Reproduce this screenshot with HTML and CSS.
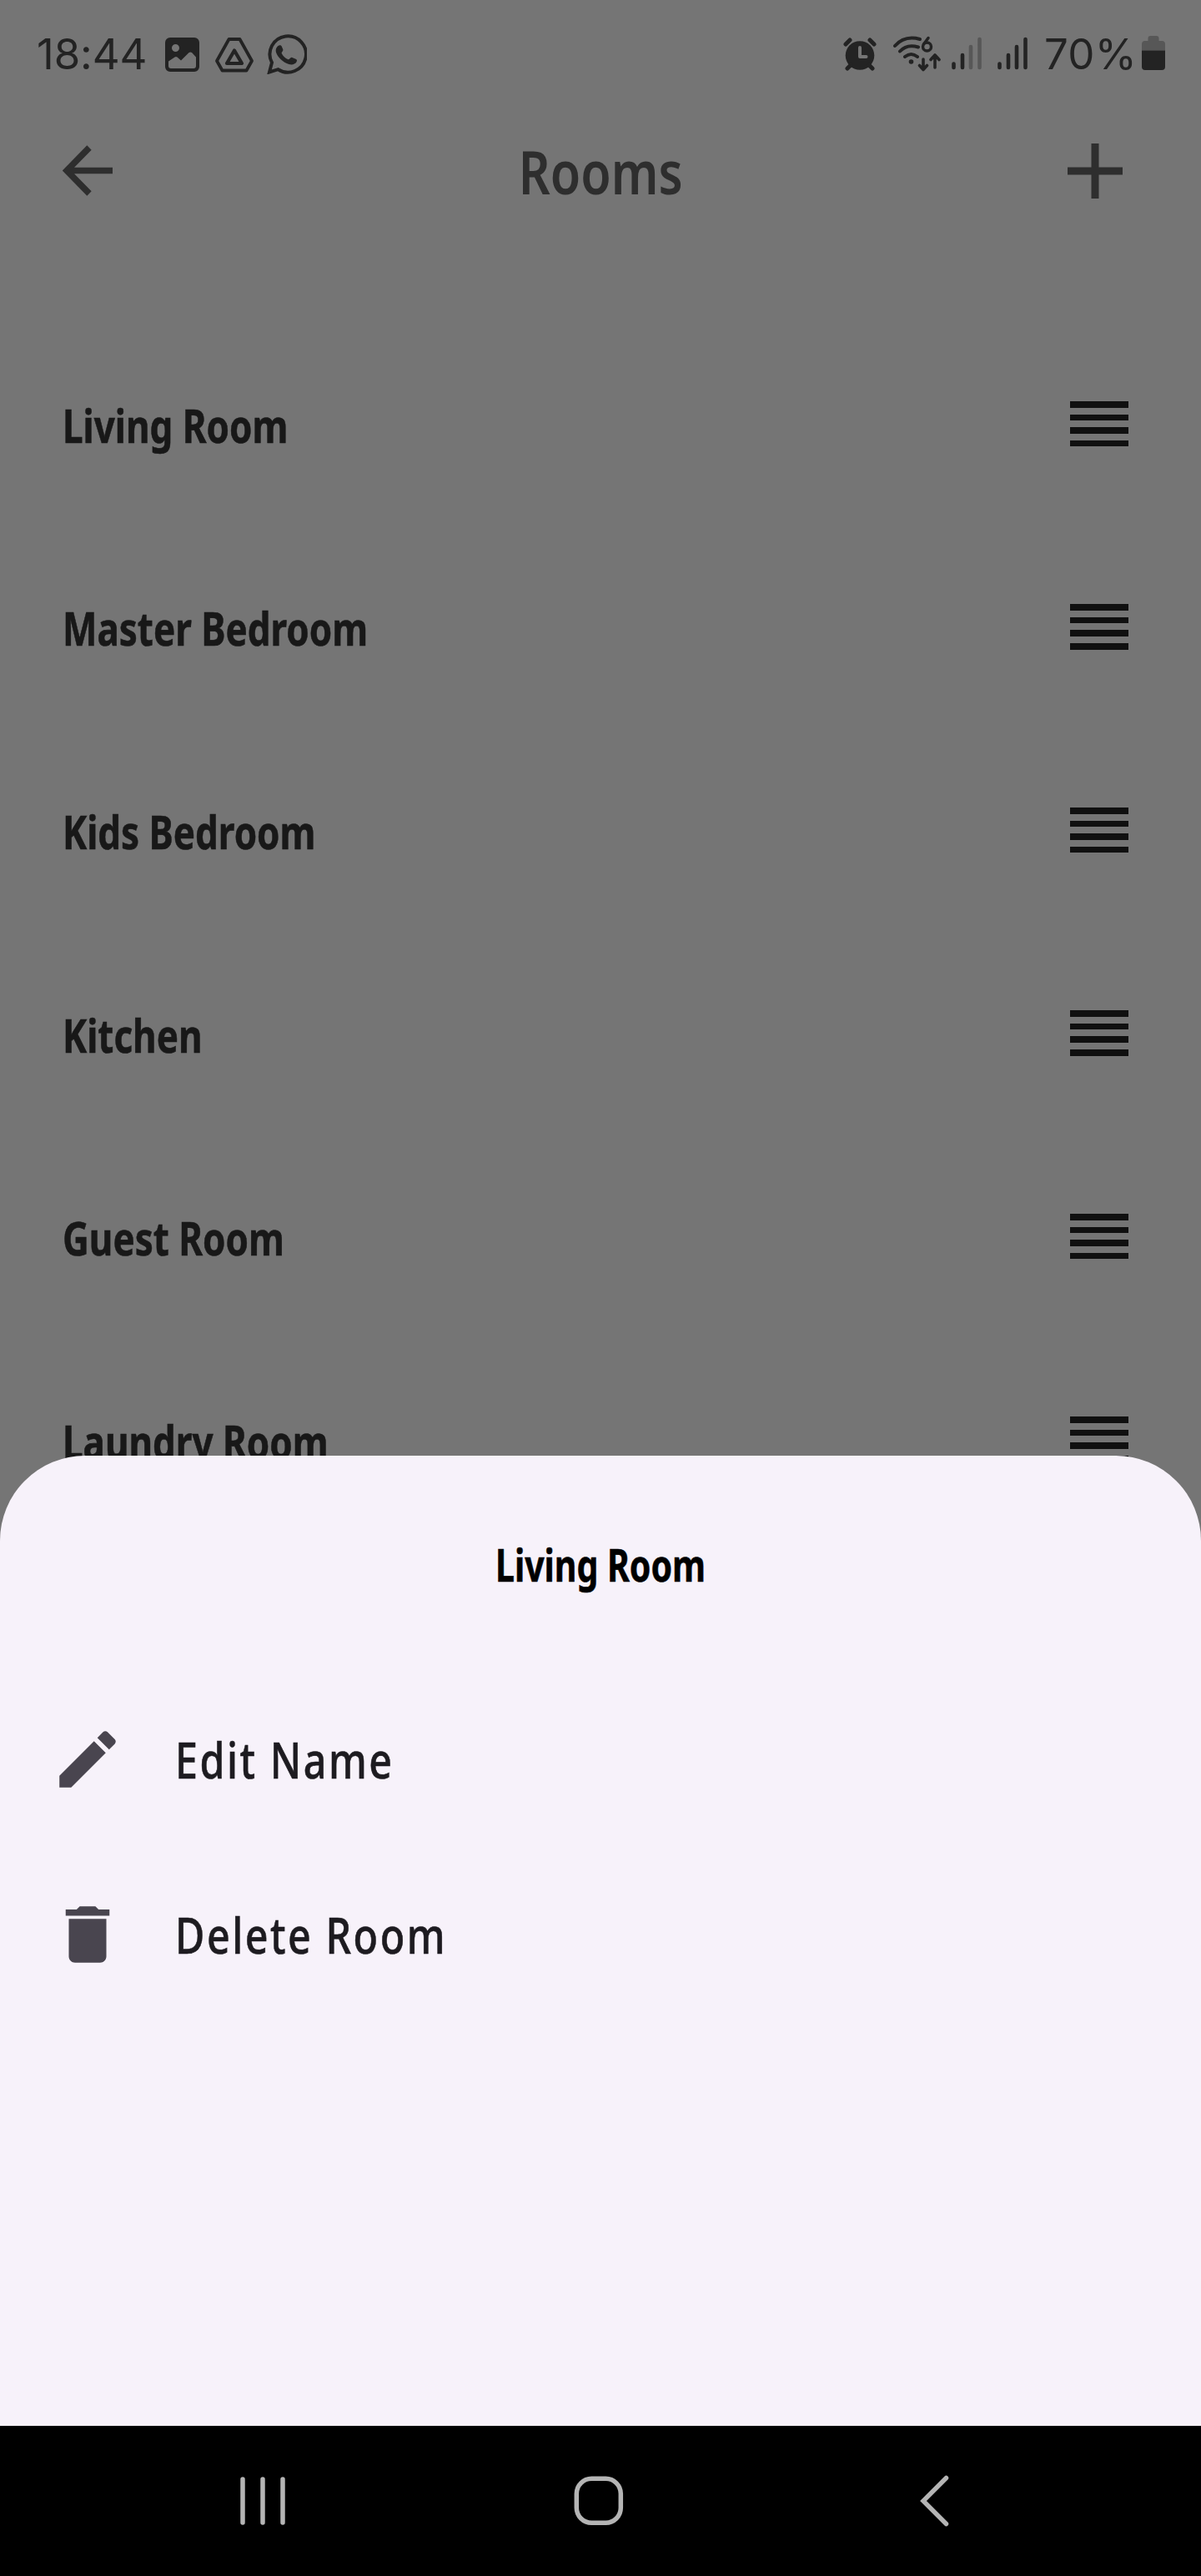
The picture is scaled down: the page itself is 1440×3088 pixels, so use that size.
FILE: index.html
```html
<!DOCTYPE html>
<html lang="en">
<head>
<meta charset="utf-8">
<title>Rooms</title>
<link rel="stylesheet" href="styles.css">
</head>
<body>
<div class="screen">
  <header class="status">
    <div class="status-left">
      <span class="clock">18:44</span>
      <svg class="s-photo" width="41" height="41" viewBox="0 0 41 41"><path fill="currentColor" fill-rule="evenodd" d="M6 0h29a6 6 0 0 1 6 6v29a6 6 0 0 1-6 6H6a6 6 0 0 1-6-6V6a6 6 0 0 1 6-6ZM12.500 8a4.500 4.500 0 1 0 0 9a4.500 4.500 0 0 0 0-9ZM4 28.500V34q0 3 3 3h27q3 0 3-3V23.500l-5-5.500q-1.700-1.200-3.400 0L19 27.500l-4.500-4q-1.500-1-3 0Z"/></svg>
      <svg class="s-drive" width="48" height="44" viewBox="0 0 48 44" fill="none" stroke="currentColor" stroke-width="3.800" stroke-linejoin="round"><path d="M17.500 3h13l14.500 26-6.500 11.500h-29L3 29Z"/><path stroke-width="4.200" d="M24 16.500l9 15.500H15Z"/></svg>
      <svg class="s-chat" width="48" height="48" viewBox="0 0 48 48"><path fill="none" stroke="currentColor" stroke-width="4" d="M3 45.500l3-11.500A21.700 21.700 0 1 1 13.500 42.200Z"/><path fill="currentColor" d="M14.500 13.500c1.700-.7 2.700-.2 3.300 1.200l1.600 3.900c.5 1.400-2 3-1.800 4.200 1.700 3.600 4.300 6 7.900 7.500 1.400.4 3-3 4.300-2.500l5.300 2.200c1.300.8 1 2 .4 3.300-1.800 3-5.500 3.700-9 2.700-7.300-2.300-13.500-8-15.500-14.200-1-4 .7-7 3.500-8.300Z"/></svg>
    </div>
    <div class="status-right">
      <svg class="s-alarm" width="40" height="40" viewBox="0 0 40 40"><circle cx="20" cy="21.500" r="17.300" fill="currentColor"/><g stroke="currentColor" stroke-width="5" stroke-linecap="round"><path d="M3 8l5-5M37 8l-5-5M9 33l-4 4M31 33l4 4"/></g><path d="M20 12v11h7.500" fill="none" stroke="#757575" stroke-width="4" stroke-linecap="round" stroke-linejoin="round"/></svg>
      <svg class="s-wifi" width="58" height="44" viewBox="0 0 58 44" fill="none" stroke="currentColor" stroke-width="4" stroke-linecap="round" stroke-linejoin="round"><path d="M3 12C11 3 22 1 33 4M9 18.500C15 12 23 11 31 13.500M15 25q7.500-6 15 0"/><circle cx="22.500" cy="31" r="2.800" fill="currentColor" stroke="none"/><path stroke-width="3.500" d="M43 2.500L37.500 10"/><circle cx="41.500" cy="13" r="5" stroke-width="3.500"/><path stroke-width="3.600" d="M37 28v12M32.500 35.500l4.500 5 4.500-5M51 38V24M46 28.500l5-5.500 5 5.500"/></svg>
      <svg class="s-signal" width="36" height="40" viewBox="0 0 36 40" stroke="currentColor" stroke-width="4.600" stroke-linecap="round"><path d="M2.500 32.500v4.500M13 22v15"/><path stroke="#575757" d="M23 12v25M33.500 3v34"/></svg>
      <svg class="s-signal2" width="36" height="40" viewBox="0 0 36 40" stroke="currentColor" stroke-width="4.600" stroke-linecap="round"><path d="M2.500 32.500v4.500M13 22v15M23 12v25M33.500 3v34"/></svg>
      <span class="percent">70%</span>
      <svg class="s-battery" width="28" height="42" viewBox="0 0 28 42"><path fill="#575757" d="M0 17.500V10q0-4 4-4h3.500V3q0-3 3-3h7q3 0 3 3v3H24q4 0 4 4v7.500Z"/><path fill="currentColor" d="M0 17.500h28V37q0 4-4 4H4q-4 0-4-4Z"/></svg>
    </div>
  </header>
  <nav class="appbar">
    <svg width="62" height="62" viewBox="0 0 62 62"><path fill="none" stroke="currentColor" stroke-width="7.500" d="M32 3L5 30.500 32 58M5 30.500h55"/></svg>
    <h1>Rooms</h1>
    <svg class="plus" width="66" height="66" viewBox="0 0 66 66"><path stroke="currentColor" stroke-width="9" d="M0 33h66M33 0v66"/></svg>
  </nav>
  <ul class="rooms">
    <li><span>Living Room</span><i class="grip"></i></li>
    <li><span>Master Bedroom</span><i class="grip"></i></li>
    <li><span>Kids Bedroom</span><i class="grip"></i></li>
    <li><span>Kitchen</span><i class="grip"></i></li>
    <li><span>Guest Room</span><i class="grip"></i></li>
    <li><span>Laundry Room</span><i class="grip"></i></li>
  </ul>
  <section class="sheet">
    <h2>Living Room</h2>
    <div class="action">
      <svg viewBox="0 0 24 24"><path fill="currentColor" d="M3 17.250V21h3.750L17.810 9.940l-3.750-3.750L3 17.250zM20.710 7.040c.39-.39.39-1.020 0-1.410l-2.340-2.340c-.39-.39-1.020-.39-1.410 0l-1.830 1.830 3.750 3.750 1.830-1.830z"/></svg>
      <span>Edit Name</span>
    </div>
    <div class="action">
      <svg viewBox="0 0 24 24"><path fill="currentColor" d="M6 19c0 1.100.9 2 2 2h8c1.100 0 2-.9 2-2V7H6v12zM19 4h-3.500l-1-1h-5l-1 1H5v2h14V4z"/></svg>
      <span>Delete Room</span>
    </div>
  </section>
  <footer class="navbar">
    <svg width="54" height="58" viewBox="0 0 54 58" stroke="currentColor" stroke-width="5.500" stroke-linecap="round"><path d="M3 3v52M27 3v52M51 3v52"/></svg>
    <svg class="home" width="60" height="60" viewBox="0 0 60 60" fill="none" stroke="currentColor" stroke-width="5.500"><rect x="3.300" y="3.300" width="53" height="53" rx="18"/></svg>
    <svg class="back" width="36" height="62" viewBox="0 0 36 62" fill="none" stroke="currentColor" stroke-width="5.500" stroke-linecap="round" stroke-linejoin="miter"><path d="M31.500 3.500L4 31l27.500 27.500"/></svg>
  </footer>
</div>
</body>
</html>
```
FILE: styles.css
```css
* { box-sizing: border-box; margin: 0; padding: 0; }
body { background: #757575; font-family: "Noto Sans", sans-serif; }
svg { display: block; flex: none; }
.screen { width: 1440px; height: 3088px; display: flex; flex-direction: column; overflow: hidden; background: #757575; }
.status { height: 130px; flex: none; display: flex; justify-content: space-between; padding: 0 43px 0 44px; color: #232323; font-family: "Inter", sans-serif; }
.status-left, .status-right { display: flex; align-items: flex-start; }
.clock, .percent { font-size: 51px; line-height: 62px; font-weight: 400; padding-top: 34px; white-space: nowrap; letter-spacing: 0.3px; }
.clock { width: 154px; letter-spacing: -0.1px; }
.percent { width: 117px; }
.s-photo { margin-top: 45px; }
.s-drive { margin: 44px 0 0 18px; }
.s-chat { margin: 41px 0 0 15px; }
.s-alarm { margin: 45px 19px 0 0; }
.s-wifi { margin: 43px 13px 0 0; }
.s-signal { margin: 44px 19px 0 0; }
.s-signal2 { margin: 44px 20px 0 0; }
.s-battery { margin-top: 43px; }
.appbar { height: 150px; flex: none; display: grid; grid-template-columns: 200px 1fr 200px; align-items: start; padding: 44px 94px 0 75px; color: #2e2e2e; }
.appbar h1 { font-size: 73px; line-height: 100px; font-weight: 560; margin-top: -19px; text-align: center; padding-left: 24px; transform: scaleX(0.81); }
.plus { justify-self: end; margin-top: -2px; }
.rooms { list-style: none; flex: none; height: 1464.700px; padding-top: 106px; }
.rooms li { height: 243.600px; display: flex; align-items: center; justify-content: space-between; padding: 0 87px 0 75px; font-size: 56px; line-height: 76px; font-weight: 700; color: #181818; }
.rooms span { padding-top: 2px; transform: scaleX(0.785); transform-origin: left center; -webkit-text-stroke: 0.6px currentColor; }
.grip { width: 70px; height: 54.600px; background: repeating-linear-gradient(#101010 0 7.600px, transparent 7.600px 15.650px); }
.sheet { flex: none; height: 1163.300px; background: #f7f2fa; border-radius: 102px 102px 0 0; padding: 95px 56px 0; position: relative; }
.sheet h2 { text-align: center; font-size: 53px; line-height: 72px; font-weight: 700; color: #000; margin-bottom: 92px; transform: scaleX(0.773); -webkit-text-stroke: 0.6px currentColor; }
.action { height: 210px; display: flex; align-items: center; gap: 56px; color: #1d1b20; }
.action svg { width: 98px; height: 90px; color: #49454f; }
.action span { font-size: 60px; line-height: 82px; font-weight: 550; letter-spacing: 3.100px; transform: scaleX(0.807); transform-origin: left center; -webkit-text-stroke: 0.6px currentColor; }
.navbar { height: 180px; flex: none; background: #000; color: #b4b4b4; display: flex; align-items: center; padding-left: 288px; }
.home { margin-left: 346px; }
.back { margin-left: 355px; }
```
